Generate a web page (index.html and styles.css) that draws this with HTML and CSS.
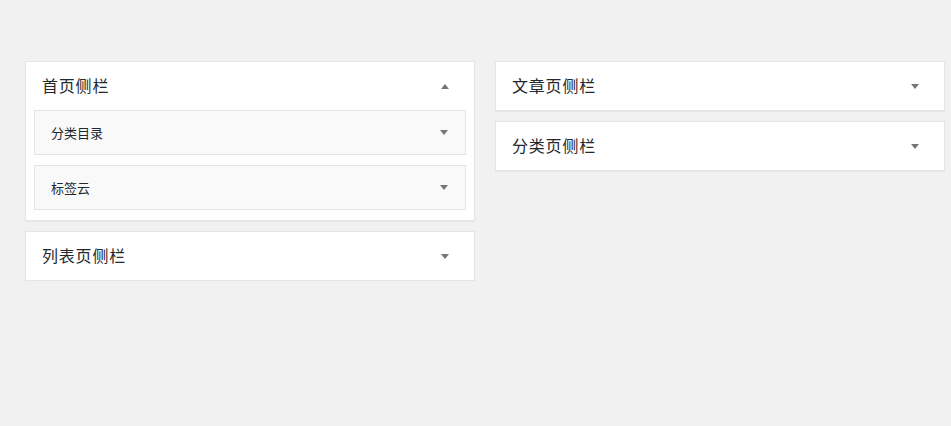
FILE: index.html
```html
<!DOCTYPE html>
<html lang="zh-CN">
<head>
<meta charset="utf-8">
<title>小工具</title>
<link rel="stylesheet" href="styles.css">
</head>
<body>
<div class="columns">
  <div class="column">
    <div class="sidebar">
      <div class="sidebar-name">
        <h2>首页侧栏</h2>
        <span class="arrow up"></span>
      </div>
      <div class="widgets">
        <div class="widget">
          <h3>分类目录</h3>
          <span class="arrow"></span>
        </div>
        <div class="widget">
          <h3>标签云</h3>
          <span class="arrow"></span>
        </div>
      </div>
    </div>
    <div class="sidebar">
      <div class="sidebar-name">
        <h2>列表页侧栏</h2>
        <span class="arrow"></span>
      </div>
    </div>
  </div>
  <div class="column">
    <div class="sidebar">
      <div class="sidebar-name">
        <h2>文章页侧栏</h2>
        <span class="arrow"></span>
      </div>
    </div>
    <div class="sidebar">
      <div class="sidebar-name">
        <h2>分类页侧栏</h2>
        <span class="arrow"></span>
      </div>
    </div>
  </div>
</div>
</body>
</html>
```

FILE: styles.css
```css
html, body {
  margin: 0;
  padding: 0;
  background: #f1f1f1;
  font-family: "Noto Sans CJK SC", "Noto Sans", sans-serif;
  color: #23282d;
}

.columns {
  display: grid;
  grid-template-columns: 450px 450px;
  column-gap: 20px;
  padding: 61px 0 0 25px;
  align-items: start;
}

.column {
  display: flex;
  flex-direction: column;
  gap: 10px;
}

.sidebar {
  background: #fff;
  border: 1px solid #e5e5e5;
  box-shadow: 0 1px 1px rgba(0, 0, 0, 0.04);
}

.sidebar-name {
  height: 48px;
  box-sizing: border-box;
  display: flex;
  align-items: center;
  justify-content: space-between;
  padding: 0 25px 0 16px;
}

.sidebar-name h2 {
  margin: 0;
  padding-bottom: 2px;
  font-size: 16px;
  font-weight: 400;
  line-height: 1;
  letter-spacing: 0.8px;
}

.widgets {
  display: flex;
  flex-direction: column;
  gap: 10px;
  padding: 0 8px 10px;
}

.widget {
  height: 43px;
  background: #f9f9f9;
  border: 1px solid #e5e5e5;
  display: flex;
  align-items: center;
  justify-content: space-between;
  padding: 0 17px 0 16px;
}

.widget h3 {
  margin: 0;
  font-size: 13px;
  font-weight: 400;
  line-height: 1;
}

.arrow {
  width: 0;
  height: 0;
  border-left: 4px solid transparent;
  border-right: 4px solid transparent;
  border-top: 5px solid #72777c;
}

.arrow.up {
  border-top: 0;
  border-bottom: 5px solid #72777c;
}
```
